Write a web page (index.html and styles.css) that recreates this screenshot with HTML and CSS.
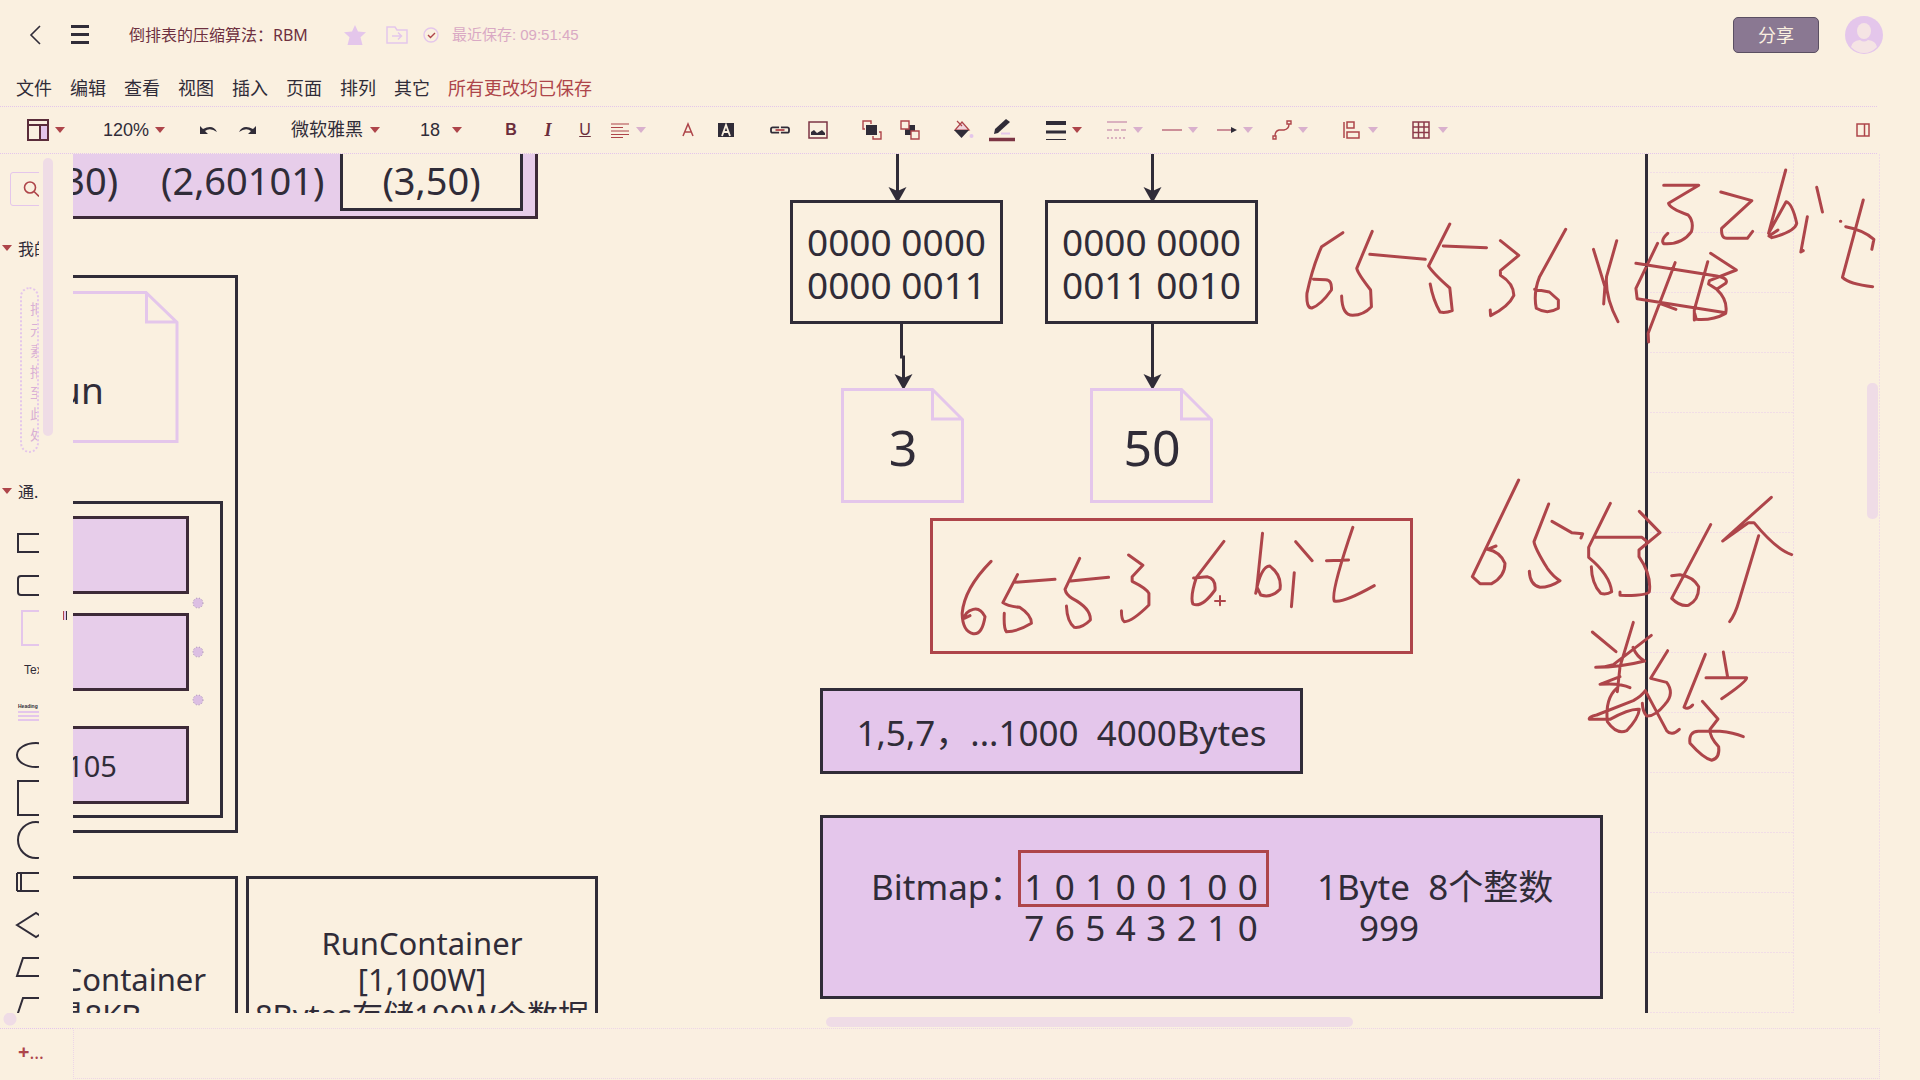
FILE: index.html
```html
<!DOCTYPE html>
<html lang="zh-CN">
<head>
<meta charset="utf-8">
<title>倒排表的压缩算法：RBM</title>
<link rel="stylesheet" href="styles.css">
</head>
<body>
<svg class="defs" aria-hidden="true">
  <symbol id="caret" viewBox="0 0 10 6"><path d="M0 0H10L5 6Z"/></symbol>
</svg>
<header class="topbar">
  <button class="plain back" aria-label="返回"><svg width="14" height="20" viewBox="0 0 14 20"><path d="M11 1 2 10l9 9" fill="none" stroke="currentColor" stroke-width="1.6"/></svg></button>
  <button class="plain burger" aria-label="菜单"><svg width="18" height="20" viewBox="0 0 18 20"><path d="M0 1.500h18M0 9.500h18M0 17.500h18" stroke="currentColor" stroke-width="3"/></svg></button>
  <h1 class="title">倒排表的压缩算法：RBM</h1>
  <div class="status">
    <button class="plain" aria-label="收藏"><svg width="22" height="20" viewBox="0 0 22 20"><path d="M11 0l3 6.500 8 .7-5.500 5 2 7.800h-15l2-7.800L0 7.200l8-.7z" fill="currentColor"/></svg></button>
    <button class="plain" aria-label="移动"><svg width="22" height="18" viewBox="0 0 22 18" fill="none" stroke="currentColor" stroke-width="1.500"><path d="M1 17V1h8l2 3h10v13zM6 10h9M12 6.500l3.500 3.500-3.500 3.500"/></svg></button>
    <svg class="ok" width="16" height="16" viewBox="0 0 16 16" fill="none" stroke="currentColor" stroke-width="1.400"><circle cx="8" cy="8" r="7"/><path d="M5 8l2.500 2.500L12 6" stroke="#ae454a"/></svg>
    <span class="saved">最近保存: 09:51:45</span>
  </div>
  <button class="share">分享</button>
  <button class="plain avatar" aria-label="账户"><svg width="38" height="38" viewBox="0 0 38 38"><circle cx="19" cy="19" r="19" fill="#e4c6eb"/><ellipse cx="19" cy="15" rx="7" ry="8" fill="#f5e4e4"/><path d="M6 31q1-6 9-7 4 3 8 0 8 1 9 7-6 6-13 6T6 31z" fill="#f5e4e4"/></svg></button>
</header>
<nav class="menu">
  <button class="plain">文件</button><button class="plain">编辑</button><button class="plain">查看</button><button class="plain">视图</button><button class="plain">插入</button><button class="plain">页面</button><button class="plain">排列</button><button class="plain">其它</button>
  <span class="allsaved">所有更改均已保存</span>
</nav>
<div class="toolbar">
  <div class="group g-layout"><button class="tool" aria-label="布局"><svg width="22" height="22" viewBox="0 0 22 22"><rect x="13" y="6" width="8" height="15" fill="#e4c6eb"/><path d="M1 1h20v20H1zM1 6h20M13 6v15" fill="none" stroke="#5a2c3a" stroke-width="2"/></svg><svg class="caret"><use href="#caret"/></svg></button></div>
  <div class="group g-zoom"><select aria-label="缩放"><option>120%</option></select><svg class="caret"><use href="#caret"/></svg></div>
  <div class="group">
    <button class="tool" aria-label="撤销"><svg width="20" height="20" viewBox="0 0 20 20"><path d="M1 6v8h8l-3-3q5-4 12 1-4-8-14-3z" fill="currentColor"/></svg></button>
    <button class="tool" aria-label="重做"><svg width="20" height="20" viewBox="0 0 20 20"><path d="M19 6v8h-8l3-3q-5-4-12 1 4-8 14-3z" fill="currentColor"/></svg></button>
  </div>
  <div class="group g-font"><select aria-label="字体"><option>微软雅黑</option></select><svg class="caret"><use href="#caret"/></svg></div>
  <div class="group g-size"><select aria-label="字号"><option>18</option></select><svg class="caret"><use href="#caret"/></svg></div>
  <div class="group g-text">
    <button class="tool glyph" aria-label="加粗"><b>B</b></button>
    <button class="tool glyph" aria-label="斜体"><i>I</i></button>
    <button class="tool glyph" aria-label="下划线"><u>U</u></button>
    <button class="tool pale" aria-label="对齐"><svg width="20" height="20" viewBox="0 0 20 20"><path d="M1 4h18M1 7.500h12M1 11h18M1 14.500h18M1 17.500h12" stroke="#ae454a" stroke-width="1.200"/></svg><svg class="caret"><use href="#caret"/></svg></button>
  </div>
  <div class="group">
    <button class="tool" aria-label="文字颜色"><svg width="20" height="20" viewBox="0 0 20 20"><path d="M5 16 10 4l5 12M7 12h6" fill="none" stroke="#ae454a" stroke-width="1.500"/></svg></button>
    <button class="tool" aria-label="文字背景"><svg width="20" height="20" viewBox="0 0 20 20"><path d="M2 3h16v14H2z" fill="currentColor"/><path d="M6 16 10 5l4 11M8 12h4" fill="none" stroke="#faf0e0" stroke-width="1.800"/></svg></button>
  </div>
  <div class="group">
    <button class="tool" aria-label="链接"><svg width="20" height="18" viewBox="0 0 22 20" fill="none" stroke="currentColor" stroke-width="2"><path d="M9 8V7H3Q1 7 1 9v2q0 2 2 2h6v-1M13 8V7h6q2 0 2 2v2q0 2-2 2h-6v-1"/><path d="M6 10h10" stroke="#ae454a"/></svg></button>
    <button class="tool" aria-label="图片"><svg width="20" height="20" viewBox="0 0 20 20"><path d="M1 2h18v16H1z" fill="none" stroke="#7c3544" stroke-width="1.500"/><path d="M3 15v-3l3-2 3 3 5-3 3 3v2z" fill="currentColor"/></svg></button>
  </div>
  <div class="group">
    <button class="tool" aria-label="置于顶层"><svg width="20" height="20" viewBox="0 0 20 20"><path d="M3 9H1V1h8v3M17 12h2v7h-8v-3" fill="none" stroke="#ae454a" stroke-width="1.400"/><path d="M4 5h11v10H4z" fill="currentColor"/></svg></button>
    <button class="tool" aria-label="置于底层"><svg width="20" height="20" viewBox="0 0 20 20"><path d="M5 5h10v10H5z" fill="currentColor"/><path d="M1 1h8v8H1zM11 11h8v8h-8z" fill="#faf0e0" stroke="#ae454a" stroke-width="1.400"/></svg></button>
  </div>
  <div class="group">
    <button class="tool" aria-label="填充"><svg width="20" height="20" viewBox="0 0 20 20"><path d="M3 1l5 5M8 2l7 8H1z" fill="#f0d5dc" stroke="#ae454a" stroke-width="1.200"/><path d="M0 10h15l-7.500 8z" fill="currentColor"/><circle cx="17.500" cy="16" r="2" fill="#e4c6eb"/></svg></button>
    <button class="tool pen" aria-label="线条颜色"><svg width="26" height="24" viewBox="0 0 26 24"><path d="M5 16l1-5L17 1l4 3L9 15z" fill="currentColor"/><path d="M12 15.500h9" stroke="#e4c6eb" stroke-width="2"/><path d="M0 21.500h26" stroke="#7c3544" stroke-width="3.500"/></svg></button>
  </div>
  <div class="group g-lines">
    <button class="tool wide" aria-label="线条宽度"><svg width="20" height="22" viewBox="0 0 20 22"><path d="M0 4h20" stroke="currentColor" stroke-width="4"/><path d="M0 13h20" stroke="currentColor" stroke-width="3"/><path d="M0 20.500h20" stroke="currentColor"/></svg><svg class="caret"><use href="#caret"/></svg></button>
    <button class="tool pale" aria-label="线条样式"><svg width="20" height="20" viewBox="0 0 20 20" fill="none" stroke="#cf9db5" stroke-width="1.500"><path d="M0 2h20"/><path d="M0 10h20" stroke-dasharray="5 2"/><path d="M0 18h20" stroke-dasharray="2 2"/></svg><svg class="caret"><use href="#caret"/></svg></button>
    <button class="tool pale" aria-label="连线类型"><svg width="20" height="20" viewBox="0 0 20 20"><path d="M0 10h20" stroke="#bd6f80" stroke-width="1.500"/></svg><svg class="caret"><use href="#caret"/></svg></button>
    <button class="tool pale" aria-label="终点"><svg width="20" height="20" viewBox="0 0 20 20"><path d="M0 10h16" stroke="#bd6f80" stroke-width="1.500"/><path d="M14 7l6 3-6 3z" fill="#302c38"/></svg><svg class="caret"><use href="#caret"/></svg></button>
    <button class="tool pale" aria-label="连线"><svg width="20" height="20" viewBox="0 0 20 20" fill="none" stroke="#ae454a" stroke-width="1.400"><path d="M3 16q0-5 4-6h5q5-1 5-6"/><path d="M1 16h3v3H1zM15 1h4v3h-4z"/></svg><svg class="caret"><use href="#caret"/></svg></button>
  </div>
  <div class="group"><button class="tool pale" aria-label="对齐分布"><svg width="20" height="20" viewBox="0 0 20 20" fill="none" stroke="#ae454a" stroke-width="1.500"><path d="M2 2v16M5 2h7v6H5zM5 12h12v6H5z"/></svg><svg class="caret"><use href="#caret"/></svg></button></div>
  <div class="group"><button class="tool pale" aria-label="表格"><svg width="20" height="20" viewBox="0 0 20 20" fill="none" stroke="#8c3a48" stroke-width="1.500"><path d="M1 2h16v16H1zM1 7h16M1 12.500h16M6.500 2v16M12 2v16"/></svg><svg class="caret"><use href="#caret"/></svg></button></div>
  <button class="tool dock" aria-label="面板"><svg width="14" height="14" viewBox="0 0 14 14" fill="none" stroke="#ae454a" stroke-width="1.500"><path d="M1 1h12v12H1zM8.500 1v12"/></svg></button>
</div>
<main class="workspace">
  <aside class="sidebar">
    <div class="library">
      <label class="search"><input type="search" aria-label="搜索图形"><svg width="17" height="17" viewBox="0 0 17 17" fill="none" stroke="#ae454a" stroke-width="1.600"><circle cx="7" cy="6.500" r="5.500"/><path d="M11 10.500l5 5"/></svg></label>
      <button class="plain section mine"><svg class="caret"><use href="#caret"/></svg>我的</button>
      <p class="drop">把元素拖至此处</p>
      <button class="plain section basic"><svg class="caret"><use href="#caret"/></svg>通.</button>
      <div class="shapes">
        <svg><path d="M17 12h40M17 30h40M18 12v18"/></svg>
        <svg><rect x="18" y="12" width="40" height="19" rx="3"/></svg>
        <svg class="light"><rect x="22" y="4" width="40" height="34"/></svg>
        <span class="sample">Text</span>
        <div class="para"><b>Heading</b><svg class="light"><path d="M18 1h40M18 5h40M18 9h40"/></svg></div>
        <svg><ellipse cx="36" cy="21" rx="19" ry="12"/></svg>
        <svg><rect x="18" y="4" width="40" height="34"/></svg>
        <svg><circle cx="36" cy="21" r="18"/></svg>
        <svg><path d="M17 12h40M17 30h40M17 12v18M21 12v18"/></svg>
        <svg><path d="M17 21 36 9l20 12-20 12z"/></svg>
        <svg><path d="M50 12H23l-6 18h33"/></svg>
        <svg><path d="M50 9H23l-6 18h33"/></svg>
      </div>
      <span class="hthumb"></span>
    </div>
    <span class="vthumb"></span>
    <span class="handle"></span>
  </aside>
  <section class="stage">
    <div class="canvas">
      <svg class="layer page" fill="none">
        <g transform="translate(-73 -154)">
          <path class="grid" d="M1650 172.500h143M1650 232.500h143M1650 292.500h143M1650 352.500h143M1650 412.500h143M1650 472.500h143M1650 532.500h143M1650 592.500h143M1650 652.500h143M1650 712.500h143M1650 772.500h143M1650 832.500h143M1650 892.500h143M1650 952.500h143M1650 1012.500h143M1793.500 154v859M1879.500 154v859"/>
        </g>
      </svg>
      <div class="node tint n-list"></div>
      <div class="node n-last">(3,50)</div>
      <span class="free f-first">(1,30)</span>
      <span class="free f-second">(2,60101)</span>
      <div class="node n-group"></div>
      <div class="node n-inner"></div>
      <div class="node tint n-a"></div>
      <div class="node tint n-b"></div>
      <div class="node tint n-c">105</div>
      <span class="free f-run">Run</span>
      <div class="node n-bitmapc">BitmapContainer<br>都是8KB</div>
      <div class="node n-runc">RunContainer<br>[1,100W]<br>8Bytes存储100W个数据</div>
      <div class="node n-bits1">0000 0000<br>0000 0011</div>
      <div class="node n-bits2">0000 0000<br>0011 0010</div>
      <span class="free f-three">3</span>
      <span class="free f-fifty">50</span>
      <div class="node red n-size"></div>
      <div class="node fill n-array">1,5,7，...1000&nbsp; 4000Bytes</div>
      <div class="node fill n-map"></div>
      <span class="free f-map">Bitmap：</span>
      <div class="bits f-bits"><span>1</span><span>0</span><span>1</span><span>0</span><span>0</span><span>1</span><span>0</span><span>0</span></div>
      <div class="bits f-index"><span>7</span><span>6</span><span>5</span><span>4</span><span>3</span><span>2</span><span>1</span><span>0</span></div>
      <div class="node red n-byte"></div>
      <span class="free f-byte">1Byte&nbsp; 8个整数</span>
      <span class="free f-999">999</span>
      <svg class="layer" fill="none">
        <g transform="translate(-73 -154)">
          <g stroke="#302c38" stroke-width="3"><path d="M897.500 154v42M1152.500 154v42M901.500 324v33h2v27M1152.500 324v60M1646.500 154v859"/></g>
          <g fill="#302c38"><path d="M897.500 203l-9-16 9 4 9-4zM1152.500 203l-9-16 9 4 9-4zM903.500 390l-9-16 9 4 9-4zM1152.500 390l-9-16 9 4 9-4z"/></g>
          <g stroke="#e4c6eb" stroke-width="3"><path d="M60 292.500h86l31 30v119H60M146.500 292v30h31M842.500 389.500h90l30 30v82h-120zM932.500 389v30h30M1091.500 389.500h90l30 30v82h-120zM1181.500 389v30h30"/></g>
          <g fill="#dcbfe3" stroke="#a58fb0" stroke-dasharray="1 2"><circle cx="198" cy="603" r="5"/><circle cx="198" cy="652" r="5"/><circle cx="198" cy="700" r="5"/></g>
        </g>
        <g class="ink">
          <g transform="translate(1207 -4) scale(.408163 .333333)">
            <path d="M154 248L102 290Q80 350 66 430Q64 475 78 474Q100 465 126 420Q128 390 112 389L82 388M226 244L188 355Q190 370 222 420L224 470Q205 495 178 496Q152 496 151 438M220 313L356 328M416 222L364 348Q375 370 416 414L422 482Q405 490 392 486Q375 450 368 402M400 288L506 293M540 272L585 316L540 362V376Q572 400 573 436Q560 470 516 497L515 480M700 238L636 380Q620 430 628 475Q655 495 682 475V450L660 426L624 418"/>
            <path d="M768 298L796 410L793 462M825 272L800 380Q796 440 828 515M925 280L872 415L875 446L1092 488M872 340L1070 378Q1100 385 1092 400L1070 418L1050 402L1052 392L1118 360L1055 310M968 338L902 550L903 576M1048 335L1015 480V510M1070 418Q1098 450 1092 490Q1060 512 1020 508L1016 490M930 460L970 478"/>
            <path d="M940 106H1026L952 160Q955 175 1000 195Q1015 215 1008 245Q985 285 940 281Q932 270 950 250M1080 126L1156 152L1082 235Q1080 265 1095 265H1145L1158 244M1239 60L1197 250L1240 155Q1255 160 1266 220Q1262 245 1205 263L1198 258L1220 240M1292 200L1276 306L1282 302M1315 112L1329 186M1429 150L1378 382Q1395 402 1452 410M1386 230Q1430 240 1455 268L1450 298M1373 214h1"/>
          </g>
          <g transform="translate(827 346) scale(.357143 .333333)">
            <path d="M255 184Q180 265 174 340Q175 395 205 401Q230 405 238 350Q225 322 205 328Q182 335 180 355L196 347M329 224L288 308Q300 318 335 322Q368 345 368 370Q330 395 298 395Q290 385 292 340M318 247L434 238M503 175L462 268Q465 285 482 295Q535 325 533 360Q510 385 488 382Q468 365 466 318M478 243L584 232M640 165L680 196L650 230V244Q690 265 697 280V315Q650 365 628 365Q620 360 620 332"/>
            <path d="M907 124L830 232Q812 290 820 312Q845 325 882 270Q885 235 860 230L822 234M1015 100L998 275M996 280Q1010 200 1035 198Q1070 225 1064 268Q1040 295 1010 285L1000 262M1104 218L1096 320M1108 125L1154 182M1268 82Q1205 280 1216 303Q1240 310 1328 257M1194 182L1256 180"/>
            <path class="thin" d="M882 303h28M896 288v28"/>
          </g>
          <g transform="translate(1327 306) scale(.333333)">
            <path d="M356 60L217 350L240 371H275Q315 350 315 310Q300 275 262 268L288 258M446 132L402 245Q405 265 442 325Q460 350 480 362Q450 382 420 382Q390 375 388 334M456 184L515 218L548 221L543 234M631 130L566 262V292Q630 345 635 395Q620 405 602 400Q575 370 574 320M585 232H726L740 244M718 154L780 218L717 270V290Q755 345 748 395Q740 408 660 406V396M932 194L815 415Q840 440 865 436Q897 420 896 380Q880 350 840 344L815 347M1114 112L968 243L1045 188H1062Q1130 270 1175 284M1076 227L1018 420Q1005 465 989 485"/>
            <path d="M577 516L648 575M700 487L660 620L652 695M754 526L640 614Q615 622 587 622Q660 622 734 603Q710 590 699 562M660 650L600 673Q660 668 690 683M650 685Q615 715 622 785Q650 825 680 812Q715 775 718 748Q690 745 630 778H568Q565 770 590 765L700 722Q725 708 736 692L800 812Q815 830 838 808M803 572L752 655L800 667Q825 700 795 733Q765 770 740 768Q728 755 727 730"/>
            <path d="M916 583L852 742Q865 750 878 735M970 576L983 652M918 653H1040Q1040 665 965 716M907 724L954 777L930 808Q928 830 956 860Q960 895 935 901Q910 895 870 850Q865 815 895 814H960Q1000 818 1030 830"/>
          </g>
        </g>
      </svg>
      <span class="scroll-v"></span>
    </div>
    <div class="track"><span class="scroll-h"></span></div>
  </section>
</main>
<footer class="pages">
  <button class="plain add"><b>+</b>...</button>
  <div class="tabs"></div>
</footer>
</body>
</html>
```
FILE: styles.css
```css
:root {
  --paper: #faf0e0;
  --dark: #302c38;
  --red: #ae454a;
  --lilac: #e4c6eb;
  --tint: #e7cdea;
  --faint: #efdce6;
}
* { box-sizing: border-box; }
body {
  margin: 0;
  height: 100vh;
  display: flex;
  flex-direction: column;
  overflow: hidden;
  background: var(--paper);
  color: var(--dark);
  font-family: "Noto Sans", "Noto Sans CJK SC", sans-serif;
}
.defs { display: none; }
svg { flex: none; display: block; }
button, select, input { font: inherit; color: inherit; background: none; border: 0; padding: 0; margin: 0; }
.plain { display: flex; align-items: center; }
.caret { width: 10px; height: 6px; fill: var(--red); }

.topbar { display: flex; align-items: center; height: 54px; padding: 16px 37px 0 29px; flex: none; }
.burger { margin-left: 28px; }
.title {
  margin: 0 0 0 40px;
  font: 400 16px/24px "Noto Sans", "Noto Sans CJK SC", sans-serif;
  color: #6e3040;
}
.status { display: flex; align-items: center; margin-left: 36px; color: var(--lilac); }
.status > * + * { margin-left: 20px; }
.status .ok { margin-left: 15px; }
.status .saved {
  margin-left: 13px;
  font: 15px/24px "Liberation Sans", "Noto Sans CJK SC", sans-serif;
  color: #d9a9c4;
}
.share {
  margin-left: auto;
  width: 86px;
  height: 36px;
  border: 1px solid #5a4f62;
  border-radius: 5px;
  background: #8a7892;
  color: var(--paper);
  font-size: 18px;
  line-height: 30px;
}
.avatar { margin-left: 26px; }

.menu { display: flex; gap: 18px; height: 53px; padding: 16px 16px 0; border-bottom: 1px dotted var(--lilac); flex: none; margin-right: 43px; font-size: 18px; line-height: 36px; }
.allsaved { color: var(--red); }

.toolbar { display: flex; align-items: center; gap: 34px; height: 47px; padding: 0 7px 0 27px; margin-right: 43px; border-bottom: 1px dotted var(--lilac); flex: none; font: 18px/24px "Liberation Sans", "Noto Sans CJK SC", sans-serif; }
.group { display: flex; align-items: center; gap: 18px; flex: none; }
.tool { display: flex; align-items: center; justify-content: center; gap: 6px; min-width: 20px; height: 26px; }
.pen { width: 20px; }
.pale .caret { fill: #d9b0cd; }
.g-layout { width: 42px; }
.g-zoom { width: 62px; gap: 6px; }
.g-font { width: 95px; gap: 6px; }
.g-size { width: 47px; gap: 11px; }
.g-text { width: 143px; gap: 17px; }
.g-lines { gap: 19px; }
.g-lines .wide { width: 42px; justify-content: flex-start; }
select { appearance: none; }
.g-zoom select { width: 46px; }
.g-font select { width: 73px; }
.g-size select { width: 21px; }
.glyph { color: #6b2e3c; font-size: 16px; }
.glyph i { font-family: "Liberation Serif", serif; font-size: 18px; font-weight: 700; }
.dock { margin-left: auto; min-width: 14px; }

.workspace { display: flex; flex: 1; min-height: 0; }
.sidebar { position: relative; width: 73px; flex: none; }
.library { position: relative; width: 39px; height: 100%; overflow: hidden; display: flex; flex-direction: column; }
.search { display: flex; align-items: center; width: 120px; height: 34px; margin: 18px 0 0 10px; padding-left: 12px; border: 1px solid var(--lilac); border-radius: 3px; flex: none; }
.search input { width: 0; }
.section { height: 24px; width: 120px; padding-left: 2px; gap: 6px; font-size: 16px; flex: none; }
.section.mine { margin-top: 30px; }
.drop {
  margin: 27px 0 0 20px;
  width: 19px;
  height: 166px;
  padding: 9px 0 0 8px;
  border: 2px dotted var(--lilac);
  border-radius: 10px;
  font-size: 14px;
  line-height: 21px;
  color: #d9b0d4;
  overflow: hidden;
  flex: none;
}
.section.basic { margin-top: 26px; }
.shapes { display: grid; grid-template-rows: repeat(12, 1fr); height: 509px; margin-top: 19px; flex: none; margin-bottom: -17px; }
.shapes svg { width: 60px; height: 42px; fill: none; stroke: var(--dark); stroke-width: 2px; }
.shapes svg.light { stroke: var(--lilac); }
.sample { padding-left: 24px; font: 12px/42px "Liberation Sans", sans-serif; }
.para { padding-top: 9px; }
.para b { display: block; padding-left: 18px; font: 700 5px/10px "Liberation Sans", sans-serif; }
.shapes .para svg { height: 12px; }
.vthumb { position: absolute; left: 43px; top: 4px; width: 10px; height: 278px; border-radius: 5px; background: var(--faint); }
.handle { position: absolute; left: 63px; top: 457px; width: 4px; height: 9px; background: var(--lilac); border-right: 1px solid var(--dark); border-left: 1px solid var(--red); }
.hthumb { position: absolute; left: 0; bottom: 0; width: 39px; height: 15px; background: radial-gradient(circle at 10px 6px, var(--faint) 6px, var(--paper) 7px); }

.stage { flex: 1; min-width: 0; display: flex; flex-direction: column; }
.canvas { position: relative; flex: 1; overflow: hidden; margin-right: 40px; font-size: 37px; line-height: 43px; }
.layer { position: absolute; left: 0; top: 0; width: 100%; height: 100%; }
.grid { stroke: #f1dde6; stroke-dasharray: 2 1; }
.ink { stroke: var(--red); stroke-linecap: round; stroke-linejoin: round; }
.ink path { stroke-width: 3px; vector-effect: non-scaling-stroke; }
.ink .thin { stroke-width: 2px; }
.node { position: absolute; display: flex; flex-direction: column; align-items: center; justify-content: center; text-align: center; border: 3px solid var(--dark); white-space: nowrap; }
.free { position: absolute; white-space: nowrap; }
.tint { background: var(--tint); border-color: #3d2a38; }
.fill { background: var(--lilac); }
.red { border-color: var(--red); }
.n-list { left: -60px; top: -60px; width: 525px; height: 125px; }
.n-last { left: 267px; top: -60px; width: 183px; height: 117px; padding-top: 55px; background: var(--paper); }
.n-last, .f-first, .f-second { font-size: 38px; }
.f-first, .f-second { top: 5px; }
.f-first { left: -53px; }
.f-second { left: 88px; }
.n-group { left: -60px; top: 121px; width: 225px; height: 558px; }
.n-inner { left: -60px; top: 347px; width: 210px; height: 317px; }
.n-a, .n-b, .n-c { left: -60px; width: 176px; height: 78px; font-size: 29px; }
.n-a { top: 362px; }
.n-b { top: 459px; }
.n-c { top: 572px; padding-right: 18px; }
.f-run { left: -38px; top: 214px; }
.n-bitmapc, .n-runc { top: 722px; font-size: 31px; line-height: 36px; }
.n-bitmapc { left: -187px; width: 352px; height: 241px; padding-left: 40px; }
.n-runc { left: 173px; width: 352px; height: 205px; }
.n-bits1, .n-bits2 { top: 46px; width: 213px; height: 124px; padding-top: 2px; }
.n-bits1 { left: 717px; }
.n-bits2 { left: 972px; }
.f-three, .f-fifty { top: 263px; width: 124px; font-size: 50px; line-height: 60px; text-align: center; }
.f-three { left: 768px; }
.f-fifty { left: 1017px; }
.n-size { left: 857px; top: 364px; width: 483px; height: 136px; }
.n-array { left: 747px; top: 534px; width: 483px; height: 86px; padding-top: 2px; font-size: 35px; }
.n-map { left: 747px; top: 661px; width: 783px; height: 184px; }
.f-map, .f-bits, .f-byte, .f-index, .f-999 { font-size: 35px; line-height: 42px; }
.f-map, .f-bits, .f-byte { top: 712px; }
.f-index, .f-999 { top: 753px; }
.f-map { left: 798px; }
.bits { position: absolute; left: 946px; width: 244px; display: grid; grid-template-columns: repeat(8, 1fr); text-align: center; }
.n-byte { left: 945px; top: 696px; width: 251px; height: 57px; }
.f-byte { left: 1244px; }
.f-999 { left: 1286px; }
.scroll-v { position: absolute; right: 2px; top: 229px; width: 11px; height: 136px; border-radius: 5px; background: var(--faint); }
.track { height: 15px; flex: none; padding: 4px 0 0 753px; }
.scroll-h { display: block; width: 527px; height: 10px; border-radius: 5px; background: var(--faint); }

.pages { display: flex; height: 52px; flex: none; }
.add { width: 73px; padding: 0 0 6px 18px; border-top: 1px dotted var(--lilac); color: var(--red); font-size: 18px; }
.add b { font-size: 20px; }
.tabs { flex: 1; margin: 0 40px 1px 0; border: 1px dotted #ecd6e6; background: #faefe1; }
```
